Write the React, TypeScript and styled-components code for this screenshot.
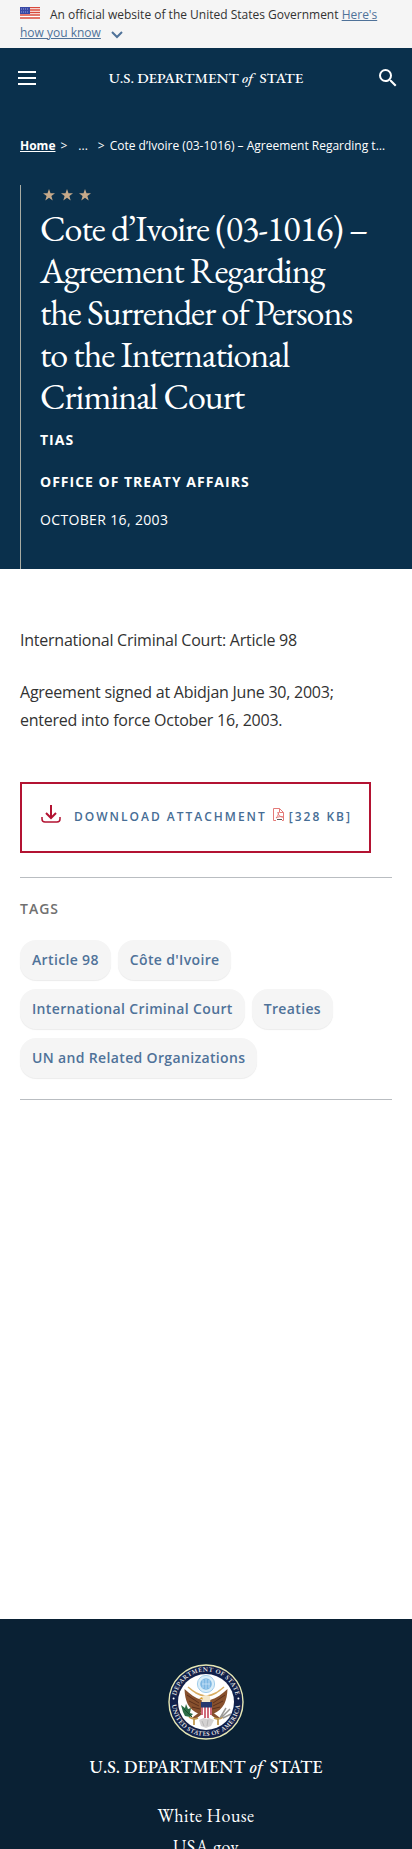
import React from "react";
import styled, { createGlobalStyle } from "styled-components";
import { MdSearch } from "react-icons/md";

const sans = `"Open Sans", "Liberation Sans", sans-serif`;
const serif = `"EB Garamond", "Liberation Serif", serif`;

const GlobalStyle = createGlobalStyle`
  *, *::before, *::after { box-sizing: border-box; }
  body { margin: 0; background: #fff; color: #323232; font-family: ${sans}; }
  h1, h2, p, ul, ol { margin: 0; padding: 0; }
  ul, ol { list-style: none; }
`;

const Page = styled.div`
  height: 100vh;
  overflow: hidden;
`;

const GovBanner = styled.aside`
  padding: 6px 20px;
  background: #f5f5f5;
  color: #323232;
  font-size: 12px;
  line-height: 18px;
`;

const Flag = styled.svg`
  display: inline-block;
  width: 20px;
  height: 12px;
  margin-right: 10px;
`;

const BannerLink = styled.a`
  color: #4f7299;
  text-decoration: underline;
`;

const Chevron = styled.svg`
  width: 12px;
  height: 12px;
  margin-left: 10px;
  vertical-align: -4px;
`;

const Hero = styled.div`
  background: #0a304c;
  color: #fff;
`;

const TopBar = styled.header`
  display: flex;
  align-items: center;
  justify-content: space-between;
  padding: 18px 12px;
`;

const IconButton = styled.button<{ $align?: string }>`
  display: flex;
  align-items: center;
  justify-content: ${(p) => p.$align ?? "center"};
  width: 30px;
  height: 24px;
  padding: 0;
  border: 0;
  background: none;
  color: #fff;
  cursor: pointer;
`;

const Wordmark = styled.a<{ $size: number }>`
  color: #fff;
  font-family: ${serif};
  font-size: ${(p) => p.$size}px;
  font-weight: 500;
  line-height: 24px;
  text-decoration: none;
  white-space: nowrap;
  i { margin-right: 3px; }
`;

const Breadcrumbs = styled.ol`
  display: flex;
  padding: 26px 22px 0 20px;
  font-size: 12px;
  line-height: 24px;
  a { color: #fff; font-weight: 700; }
`;

const Crumb = styled.li<{ $gap?: number }>`
  flex: none;
  margin-right: ${(p) => p.$gap ?? 5}px;
`;

const CurrentCrumb = styled.li`
  min-width: 0;
  overflow: hidden;
  text-overflow: ellipsis;
  white-space: nowrap;
`;

const Headline = styled.div`
  margin: 27px 20px 0;
  padding: 4px 23px 37px 19px;
  border-left: 1px solid #a9aca3;
`;

const Stars = styled.svg`
  display: block;
  width: 50px;
  height: 12px;
  margin-left: 3px;
`;

const Title = styled.h1`
  margin-top: 7px;
  font-family: ${serif};
  font-size: 36px;
  font-weight: 400;
  line-height: 42px;
  letter-spacing: -1px;
`;

const Meta = styled.p<{ $strong?: boolean }>`
  margin-top: ${(p) => (p.$strong ? 18 : 14)}px;
  font-size: 14px;
  font-weight: ${(p) => (p.$strong ? 700 : 400)};
  line-height: 24px;
  letter-spacing: ${(p) => (p.$strong ? "1px" : "0.025em")};
  text-transform: uppercase;
  h1 + & { margin-top: 10px; }
`;

const Main = styled.main`
  padding: 57px 20px 519px;
`;

const Paragraph = styled.p`
  margin-bottom: 24px;
  padding-right: 20px;
  font-size: 16px;
  line-height: 28px;
  letter-spacing: -0.015em;
`;

const Download = styled.a`
  display: inline-flex;
  align-items: center;
  height: 71px;
  margin-top: 24px;
  padding: 0 17px 2px 19px;
  border: 2px solid #b31332;
  color: #466d95;
  font-size: 12px;
  font-weight: 600;
  letter-spacing: 2px;
  line-height: 24px;
  text-decoration: none;
  text-transform: uppercase;
  white-space: nowrap;
`;

const DownloadIcon = styled.svg`
  flex: none;
  width: 20px;
  height: 18px;
  margin: 0 13px 6px 0;
`;

const PdfIcon = styled.svg`
  flex: none;
  width: 11px;
  height: 13px;
  margin: 0 5px 4px 6px;
`;

const TagSection = styled.section`
  margin-top: 24px;
  padding: 19px 0 21px;
  border-top: 1px solid #b9bdc1;
  border-bottom: 1px solid #b9bdc1;
`;

const TagHeading = styled.h2`
  color: #707070;
  font-size: 14px;
  font-weight: 600;
  line-height: 24px;
  letter-spacing: 1px;
`;

const TagList = styled.ul`
  display: flex;
  flex-wrap: wrap;
  gap: 9px 7px;
  margin-top: 19px;
`;

const Tag = styled.a`
  display: block;
  padding: 8px 12px;
  border-radius: 16px;
  background: #f5f5f5;
  box-shadow: 0 1px 1px #ececec;
  color: #4f7299;
  font-size: 14px;
  font-weight: 600;
  line-height: 24px;
  letter-spacing: 0.025em;
  text-decoration: none;
`;

const Footer = styled.footer`
  display: flex;
  flex-direction: column;
  align-items: center;
  padding: 45px 20px 32px;
  background: #0a2134;
`;

const Seal = styled.svg`
  width: 76px;
  height: 76px;
  margin-bottom: 15px;
`;

const FooterLinks = styled.ul`
  margin-top: 21px;
  font-family: ${serif};
  font-size: 18px;
  line-height: 31px;
  letter-spacing: 0.025em;
  text-align: center;
  a { color: #fff; text-decoration: none; }
`;

const tags = ["Article 98", "Côte d'Ivoire", "International Criminal Court", "Treaties", "UN and Related Organizations"];
const star = "M6 0L7.5 4.2H12L8.4 6.9L9.7 11.4L6 8.7L2.3 11.4L3.6 6.9L0 4.2H4.5Z";

const StateSeal = () => (
  <Seal viewBox="0 0 76 76" role="img" aria-label="Department of State seal">
    <defs>
      <path id="sealTop" d="M7.500 38a30.500 30.500 0 0 1 61 0" />
      <path id="sealBottom" d="M4 34a34 34 0 0 0 68 0" transform="translate(0 4)" />
    </defs>
    <circle cx="38" cy="38" r="37" fill="#11204a" stroke="#e6e7b4" strokeWidth="1.4" />
    <circle cx="38" cy="38" r="28" fill="#fff" />
    <g fill="#e7e6e4" fontFamily={serif} fontSize="6.5" fontWeight="600" letterSpacing="0.4">
      <text textAnchor="middle"><textPath href="#sealTop" startOffset="50%">DEPARTMENT OF STATE</textPath></text>
      <text textAnchor="middle"><textPath href="#sealBottom" startOffset="50%">UNITED STATES OF AMERICA</textPath></text>
    </g>
    <circle cx="5.6" cy="34.5" r="1" fill="#fff" />
    <circle cx="70.4" cy="34.5" r="1" fill="#fff" />
    <circle cx="38" cy="20" r="8.6" fill="#d9edf8" stroke="#a3cdea" strokeWidth="1" />
    <circle cx="38" cy="20" r="5.8" fill="#7db7e3" />
    <path d="M35 16v8M38 15v10M41 16v8M34 20h8" stroke="#d4eafa" strokeWidth="0.7" />
    <path d="M16.500 25C17 37 20 45 31 50L34 47V36C27 34 22 30 16.500 25ZM59.500 25C59 37 56 45 45 50L42 47V36C49 34 54 30 59.500 25Z" fill="#87502d" />
    <path d="M19 31l12 8M21 37l10 5M24 43l8 2M57 31l-12 8M55 37l-10 5M52 43l-8 2" stroke="#5c301d" strokeWidth="1" />
    <path d="M20 23c6 5 10 8 17 9M56 23c-6 5-10 8-17 9" fill="none" stroke="#d9ad62" strokeWidth="1.5" />
    <path d="M34 39c-1-5 0-8 4-8s5 3 4 8Z" fill="#f4e8cb" />
    <path d="M34 33l-3 1.500 4 1Z" fill="#d69b2a" />
    <path d="M33 49l-8 6M43 49l8 6" stroke="#87502d" strokeWidth="3" />
    <path d="M21 53q5 3 9 1M46 54q5 2 9-1M26 56v5M50 56v5" fill="none" stroke="#c39a50" strokeWidth="1.8" />
    <path d="M31 56l7-3 8 3-3 6-5 2-5-2Z" fill="#d4d2d2" />
    <path d="M34 57l2 5M40 56l-1 6" stroke="#aaa" strokeWidth="0.700" />
    <path d="M33 38h11v12q-1 4-5.500 5Q34 54 33 50Z" fill="#fff" />
    <path d="M34 43v8M37 43v11M40 43v11M43 43v8" stroke="#bc2d42" strokeWidth="1.400" />
    <path d="M33 38h11v5.500H33Z" fill="#26396f" />
    <path d="M13 41l4 3 1-4 2 5 3-1-1 5 3 1-3 3-5-1-2-4Z" fill="#2b6d45" />
    <path d="M16 45l8 8" stroke="#174a2d" strokeWidth="1" />
    <path d="M52 54l6-10M54 53l8-8M55 54l8-4" stroke="#9a9996" strokeWidth="1.500" />
  </Seal>
);

const Brand = ({ size }: { size: number }) => (
  <Wordmark href="#home" $size={size}>U.S. DEPARTMENT <i>of</i> STATE</Wordmark>
);

export default function App() {
  return (
    <Page>
      <GlobalStyle />
      <GovBanner>
        <Flag viewBox="0 0 20 12" aria-hidden="true">
          <path d="M0 0h20v12H0Z" fill="#fff" />
          <path d="M0 .5h20M0 3h20M0 5.500h20M0 8h20M0 11h20" stroke="#d9493b" strokeWidth="1.300" />
          <path d="M0 0h10v7H0Z" fill="#3949a5" />
          <path d="M1 2h8M1 5h8" stroke="#98a0dc" strokeDasharray="1 1" />
        </Flag>
        An official website of the United States Government{" "}
        <BannerLink href="#how-you-know">Here's how you know</BannerLink>
        <Chevron viewBox="0 0 12 12" aria-hidden="true">
          <path d="M1 3l5 5 5-5" fill="none" stroke="#4f7299" strokeWidth="2" />
        </Chevron>
      </GovBanner>

      <Hero>
        <TopBar>
          <IconButton aria-label="Menu">
            <svg width="18" height="14" viewBox="0 0 18 14">
              <path d="M0 1h18M0 7h18M0 13h18" stroke="#fff" strokeWidth="2" />
            </svg>
          </IconButton>
          <Brand size={15} />
          <IconButton aria-label="Search" $align="flex-end"><MdSearch size={24} /></IconButton>
        </TopBar>

        <nav aria-label="Breadcrumb">
          <Breadcrumbs>
            <Crumb><a href="#home">Home</a></Crumb>
            <Crumb $gap={11}>&gt;</Crumb>
            <Crumb $gap={10}>...</Crumb>
            <Crumb>&gt;</Crumb>
            <CurrentCrumb>Cote d’Ivoire (03-1016) – Agreement Regarding the Surrender of Persons to the International Criminal Court</CurrentCrumb>
          </Breadcrumbs>
        </nav>

        <Headline>
          <Stars viewBox="0 0 50 12" fill="#c6a98a" aria-hidden="true">
            <path d={star} />
            <path d={star} transform="translate(18 0)" />
            <path d={star} transform="translate(36 0)" />
          </Stars>
          <Title>Cote d’Ivoire (03-1016) – Agreement Regarding the Surrender of Persons to the International Criminal Court</Title>
          <Meta $strong>TIAS</Meta>
          <Meta $strong>Office of Treaty Affairs</Meta>
          <Meta>October 16, 2003</Meta>
        </Headline>
      </Hero>

      <Main>
        <Paragraph>International Criminal Court: Article 98</Paragraph>
        <Paragraph>Agreement signed at Abidjan June 30, 2003; entered into force October 16, 2003.</Paragraph>
        <Download href="#attachment">
          <DownloadIcon viewBox="0 0 20 18" fill="none" stroke="#b31332" strokeWidth="2" aria-hidden="true">
            <path d="M10 0v12M5 8l5 5 5-5" />
            <path d="M1 12v2q0 3 3 3h12q3 0 3-3v-2" strokeWidth="1.500" />
          </DownloadIcon>
          Download Attachment
          <PdfIcon viewBox="0 0 11 13" fill="none" stroke="#e47a78" aria-hidden="true">
            <path d="M3 12.500H.5V.5h6l4 4v8H9M6.500.5v4h4" />
            <path d="M3 10c2-2 3-4 2-6 0 3 2 5 5 5-3-1-5 0-7 1Z" />
            <path d="M4 11.500h5" stroke="#555" />
          </PdfIcon>
          [328 KB]
        </Download>
        <TagSection>
          <TagHeading>TAGS</TagHeading>
          <TagList>
            {tags.map((tag) => <li key={tag}><Tag href="#tag">{tag}</Tag></li>)}
          </TagList>
        </TagSection>
      </Main>

      <Footer>
        <StateSeal />
        <Brand size={18} />
        <FooterLinks>
          <li><a href="#white-house">White House</a></li>
          <li><a href="#usa-gov">USA.gov</a></li>
        </FooterLinks>
      </Footer>
    </Page>
  );
}
